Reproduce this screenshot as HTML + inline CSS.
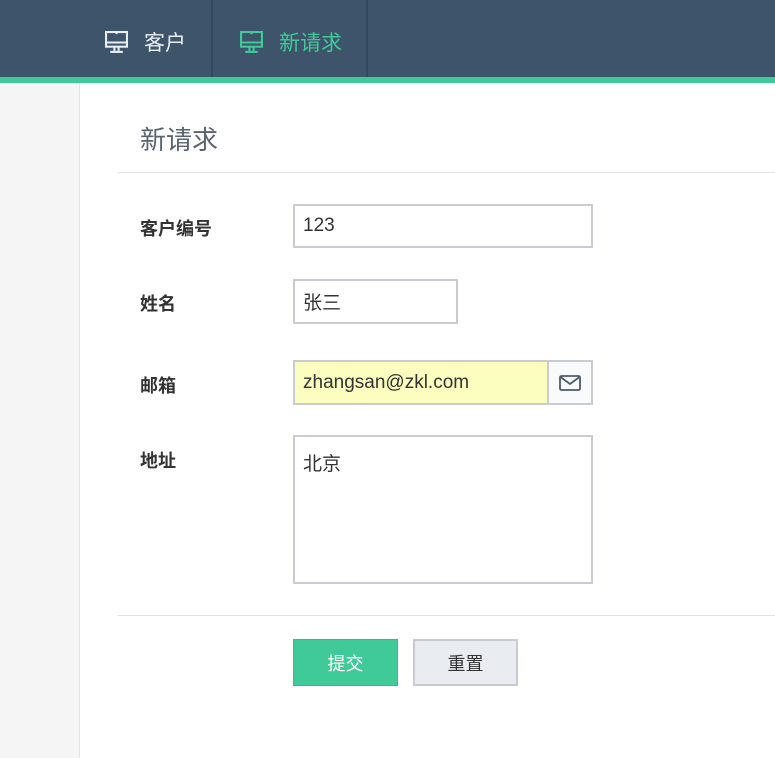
<!DOCTYPE html>
<html><head><meta charset="utf-8"><style>
*{margin:0;padding:0;box-sizing:border-box}
body{width:775px;height:758px;overflow:hidden;background:#fff;font-family:"Liberation Sans","Noto Sans CJK SC",sans-serif;position:relative}
.hd{position:absolute;left:0;top:0;width:775px;height:77px;background:#3e546b}
.bar{position:absolute;left:0;top:77px;width:775px;height:6px;background:#40c999}
.div{position:absolute;top:0;width:2px;height:77px;background:#34475b}
.nav{position:absolute;top:27px;font-size:21px;color:#e9eef3;display:flex;align-items:center}
.nav svg{margin-right:16px}
.side{position:absolute;left:0;top:83px;width:80px;height:675px;background:#f5f5f5;border-right:1px solid #e4e4e4}
.t{position:absolute;left:140px;top:120px;font-size:26px;color:#5a6470}
.hr{position:absolute;left:118px;width:657px;height:1px;background:#e2e2e2}
.lb{position:absolute;left:140px;font-size:18px;font-weight:bold;color:#333}
.in{position:absolute;left:293px;border:2px solid #c8cad4;font-size:19px;color:#333;padding-left:8px;display:flex;align-items:center}
.btn{position:absolute;top:639px;width:105px;height:47px;font-size:18px;display:flex;align-items:center;justify-content:center}
</style></head><body>
<div class="hd"></div><div class="bar"></div>
<div class="div" style="left:211px"></div><div class="div" style="left:366px"></div>
<div class="nav" style="left:105px"><svg width="23" height="23" viewBox="0 0 22 22" fill="none" stroke="#e9eef3" stroke-width="2"><rect x="1" y="1" width="20" height="14"/><line x1="1" y1="11" x2="21" y2="11"/><line x1="11" y1="1" x2="11" y2="3"/><line x1="9" y1="15" x2="9" y2="19"/><line x1="13" y1="15" x2="13" y2="19"/><line x1="5" y1="20" x2="17" y2="20"/></svg>客户</div>
<div class="nav" style="left:240px;color:#40c999"><svg width="23" height="23" viewBox="0 0 22 22" fill="none" stroke="#40c999" stroke-width="2"><rect x="1" y="1" width="20" height="14"/><line x1="1" y1="11" x2="21" y2="11"/><line x1="11" y1="1" x2="11" y2="3"/><line x1="9" y1="15" x2="9" y2="19"/><line x1="13" y1="15" x2="13" y2="19"/><line x1="5" y1="20" x2="17" y2="20"/></svg>新请求</div>
<div class="side"></div>
<div class="t">新请求</div>
<div class="hr" style="top:172px"></div>
<div class="lb" style="top:215px">客户编号</div>
<div class="in" style="top:204px;width:300px;height:44px">123</div>
<div class="lb" style="top:290px">姓名</div>
<div class="in" style="top:279px;width:165px;height:45px">张三</div>
<div class="lb" style="top:372px">邮箱</div>
<div class="in" style="top:360px;width:300px;height:45px;background:#fbfebf;padding:0">
 <div style="flex:1;padding-left:8px;font-size:19px">zhangsan@zkl.com</div>
 <div style="width:44px;height:100%;background:#f9fafb;border-left:2px solid #c8cad4;display:flex;align-items:center;justify-content:center"><svg width="22" height="16" viewBox="0 0 22 16" fill="none" stroke="#4a5a6e" stroke-width="1.8"><rect x="1" y="1" width="20" height="14" rx="1.5"/><path d="M1.5 2l9.5 7 9.5-7"/></svg></div>
</div>
<div class="lb" style="top:447px">地址</div>
<div class="in" style="top:435px;width:300px;height:149px;align-items:flex-start;padding-top:12px">北京</div>
<div class="hr" style="top:615px"></div>
<div class="btn" style="left:293px;background:#40c999;color:#fff;border:1px solid #3ab88c">提交</div>
<div class="btn" style="left:413px;background:#e9ecf0;color:#333;border:2px solid #c8cad4">重置</div>
</body></html>
